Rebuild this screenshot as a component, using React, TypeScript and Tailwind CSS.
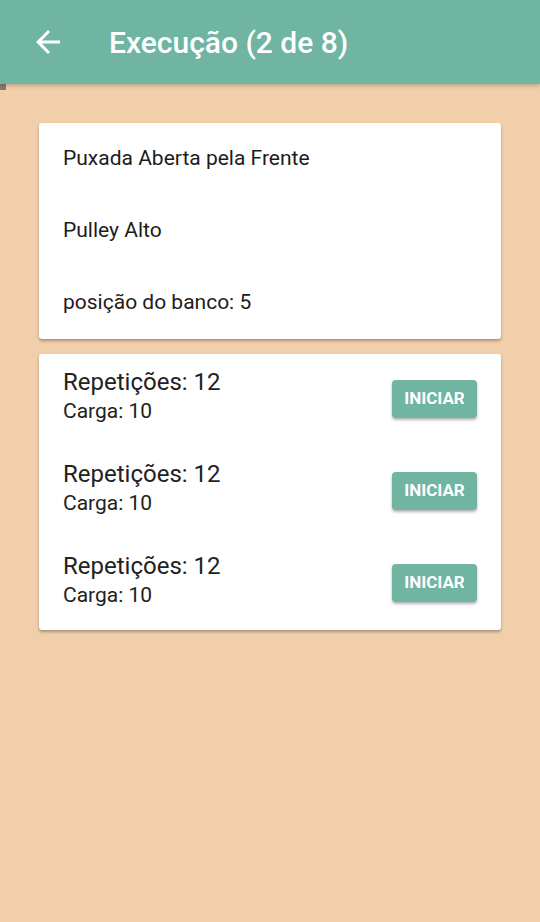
import React from 'react';

const sets = [
  { reps: 12, carga: 10 },
  { reps: 12, carga: 10 },
  { reps: 12, carga: 10 },
];

const BackIcon = () => (
  <svg width="36" height="36" viewBox="0 0 24 24" fill="white">
    <path d="M20 11H7.83l5.59-5.59L12 4l-8 8 8 8 1.41-1.41L7.83 13H20v-2z" />
  </svg>
);

export default function App() {
  return (
    <div className="min-h-[922px] bg-[#f1cfaa] font-['Roboto',sans-serif]">
      {/* Barra superior */}
      <header className="h-[84px] bg-[#6fb5a1] flex items-center pl-[30px] shadow-[0_2px_4px_rgba(0,0,0,0.2)] relative z-10">
        <BackIcon />
        <h1 className="ml-[43px] text-white text-[30px] font-medium">Execução (2 de 8)</h1>
      </header>
      <div className="w-[6px] h-[6px] bg-[#8a7a68]" />

      <main className="px-[39px] pt-[33px] flex flex-col gap-[15px]">
        {/* Detalhes do exercício */}
        <section className="bg-white rounded-[3px] shadow-[0_2px_3px_rgba(0,0,0,0.3)] pl-[24px] pt-[23px] pb-[25px] text-[21px] text-[#1c1c1c] flex flex-col gap-[48px]">
          <div className="h-[24px] leading-[24px]">Puxada Aberta pela Frente</div>
          <div className="h-[24px] leading-[24px]">Pulley Alto</div>
          <div className="h-[24px] leading-[24px]">posição do banco: 5</div>
        </section>

        {/* Séries */}
        <section className="bg-white rounded-[3px] shadow-[0_2px_3px_rgba(0,0,0,0.3)] pl-[24px] pr-[24px] pt-[14px] pb-[21px] flex flex-col gap-[35px]">
          {sets.map((s, i) => (
            <div key={i} className="flex items-center justify-between">
              <div className="text-[#222]">
                <div className="text-[24px] leading-[28px]">Repetições: {s.reps}</div>
                <div className="text-[21px] leading-[27px] mt-[2px]">Carga: {s.carga}</div>
              </div>
              <button className="w-[85px] h-[38px] rounded-[4px] bg-[#6fb5a1] text-white text-[17px] font-bold shadow-[0_2px_3px_rgba(0,0,0,0.3)] mt-[5px]">
                INICIAR
              </button>
            </div>
          ))}
        </section>
      </main>
    </div>
  );
}
